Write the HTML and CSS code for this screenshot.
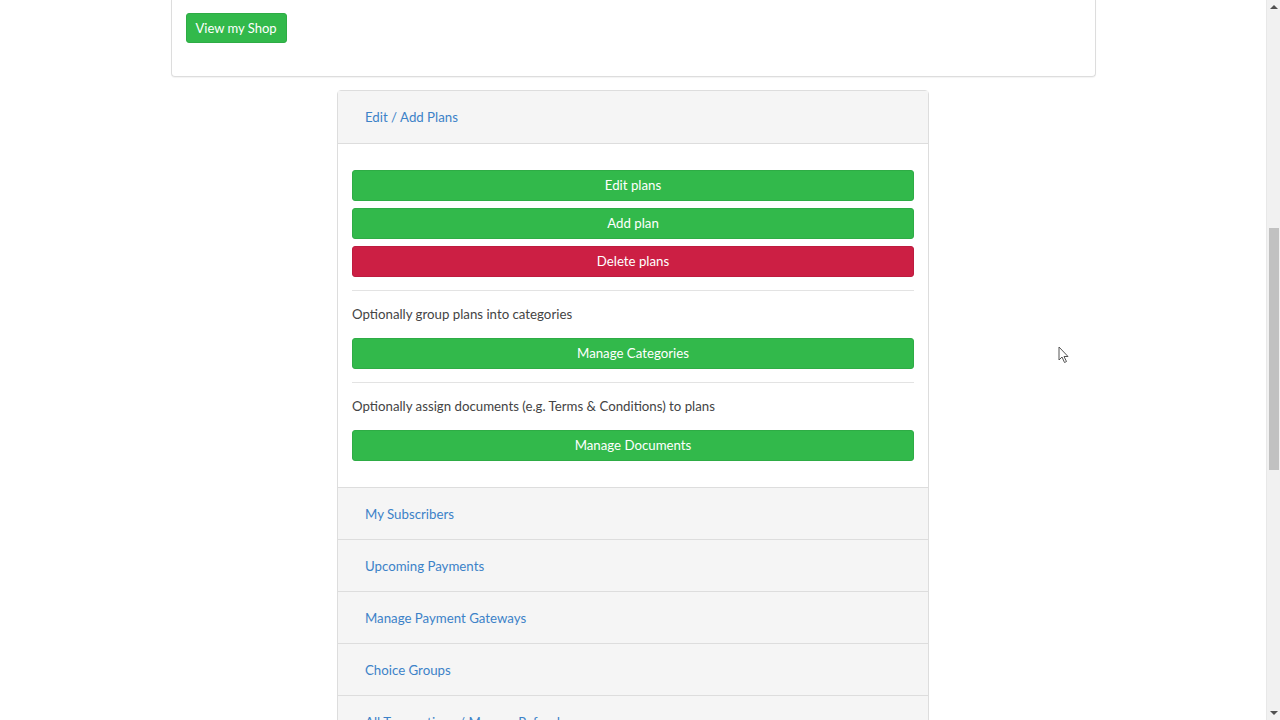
FILE: index.html
```html
<!DOCTYPE html>
<html>
<head>
<meta charset="utf-8">
<link rel="stylesheet" href="styles.css">
</head>
<body>
<div class="page">
  <div class="main">
    <div class="shop-card">
      <a class="btn btn-green btn-small">View my Shop</a>
    </div>
    <div class="panel">
      <div class="panel-head"><a class="link">Edit / Add Plans</a></div>
      <div class="panel-body">
        <a class="btn btn-green btn-block">Edit plans</a>
        <a class="btn btn-green btn-block gap">Add plan</a>
        <a class="btn btn-red btn-block gap">Delete plans</a>
        <hr class="rule">
        <p class="note">Optionally group plans into categories</p>
        <a class="btn btn-green btn-block">Manage Categories</a>
        <hr class="rule">
        <p class="note">Optionally assign documents (e.g. Terms &amp; Conditions) to plans</p>
        <a class="btn btn-green btn-block">Manage Documents</a>
      </div>
      <div class="panel-item"><a class="link">My Subscribers</a></div>
      <div class="panel-item"><a class="link">Upcoming Payments</a></div>
      <div class="panel-item"><a class="link">Manage Payment Gateways</a></div>
      <div class="panel-item"><a class="link">Choice Groups</a></div>
      <div class="panel-item"><a class="link">All Transactions / Manage Refunds</a></div>
    </div>
  </div>
  <div class="scrollbar">
    <div class="arrow up"></div>
    <div class="track"><div class="thumb"></div></div>
    <div class="arrow down"></div>
  </div>
</div>
<svg class="cursor" width="12" height="18" viewBox="0 0 12 18"><path d="M1 1 L1 14 L4 11 L6.5 16.5 L8.5 15.5 L6 10.5 L10 10.5 Z" fill="#fff" stroke="#555" stroke-width="1"/></svg>
</body>
</html>
```
FILE: styles.css
```css
html, body { margin: 0; padding: 0; height: 720px; overflow: hidden; background: #fff; }
body { font-family: Lato, "Open Sans", "Liberation Sans", sans-serif; font-size: 13.25px; color: #444; }
.page { display: flex; height: 720px; }
.main { flex: 1; display: flex; flex-direction: column; align-items: center; }
.shop-card {
  width: 925px; border: 1px solid #ddd; border-top: none; border-radius: 0 0 4px 4px;
  padding: 13px 14px 33px; box-sizing: border-box;
  box-shadow: 0 1px 1px rgba(0,0,0,0.05);
}
.btn { display: flex; align-items: center; justify-content: center; color: #fff; border-radius: 3px; text-decoration: none; font-size: 13.25px; box-sizing: border-box; cursor: pointer; }
.btn-small { display: inline-flex; height: 30px; padding: 0 9px; font-size: 13px; }
.btn-green { background: #32b94b; border: 1px solid #2eac45; }
.btn-red { background: #cc1f44; border: 1px solid #bd1c3f; }
.btn-block { height: 31px; width: 100%; padding-bottom: 1px; }
.gap { margin-top: 7px; }
.panel { width: 592px; margin-top: 13px; border: 1px solid #ddd; border-radius: 4px 4px 0 0; box-sizing: border-box; flex-shrink: 0; }
.panel-head { height: 52px; background: #f5f5f5; display: flex; align-items: center; padding-left: 27px; border-bottom: 1px solid #ddd; }
.link { color: #3c82c8; font-size: 13.25px; text-decoration: none; }
.panel-body { padding: 26px 14px 26px; background: #fff; }
.rule { border: none; border-top: 1px solid #e3e3e3; margin: 13px 0 0; }
.note { margin: 13px 0 14px; line-height: 20px; color: #444; }
.panel-item { height: 51px; background: #f5f5f5; border-top: 1px solid #ddd; display: flex; align-items: center; padding-left: 27px; }
.scrollbar { width: 14px; background: #f1f1f1; display: flex; flex-direction: column; align-items: stretch; border-left: 1px solid #e8e8e8; box-sizing: border-box; }
.arrow { height: 14px; position: relative; }
.arrow.up::after { content: ""; position: absolute; left: 3px; top: 5px; border-left: 4px solid transparent; border-right: 4px solid transparent; border-bottom: 4px solid #505050; }
.arrow.down::after { content: ""; position: absolute; left: 3px; top: 5px; border-left: 4px solid transparent; border-right: 4px solid transparent; border-top: 4px solid #505050; }
.track { flex: 1; padding-top: 214px; }
.thumb { height: 242px; background: #c1c1c1; margin: 0 1px 0 2px; }
.cursor { position: absolute; left: 1058px; top: 346px; }
```
